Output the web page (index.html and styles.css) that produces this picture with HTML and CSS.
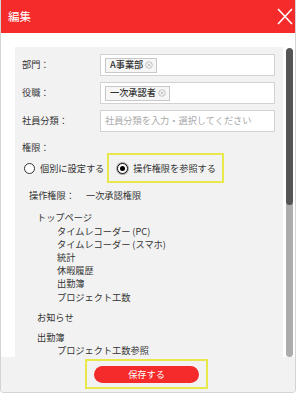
FILE: index.html
```html
<!DOCTYPE html>
<html lang="ja">
<head>
<meta charset="utf-8">
<link rel="stylesheet" href="styles.css">
</head>
<body>
<div class="modal">
  <div class="header">
    <span class="title">編集</span>
    <svg class="close" width="16" height="17" viewBox="0 0 16 17"><path d="M1 1 L15 16 M15 1 L1 16" stroke="#fff" stroke-width="1.6" fill="none"/></svg>
  </div>
  <div class="body">
    <div class="panel">
      <div class="content">
        <div class="form">
          <div class="label">部門：</div>
          <div class="input"><span class="tag">A事業部<svg class="x" width="8" height="8" viewBox="0 0 8 8"><circle cx="4" cy="4" r="3.3" fill="none" stroke="#bbb" stroke-width="0.9"/><path d="M2.6 2.6 L5.4 5.4 M5.4 2.6 L2.6 5.4" stroke="#bbb" stroke-width="0.9"/></svg></span></div>
          <div class="label">役職：</div>
          <div class="input"><span class="tag">一次承認者<svg class="x" width="8" height="8" viewBox="0 0 8 8"><circle cx="4" cy="4" r="3.3" fill="none" stroke="#bbb" stroke-width="0.9"/><path d="M2.6 2.6 L5.4 5.4 M5.4 2.6 L2.6 5.4" stroke="#bbb" stroke-width="0.9"/></svg></span></div>
          <div class="label">社員分類：</div>
          <div class="input"><span class="placeholder">社員分類を入力・選択してください</span></div>
        </div>
        <div class="perm-label">権限：</div>
        <div class="radios">
          <div class="radio"><span class="circle"></span><span>個別に設定する</span></div>
          <div class="radio selected-box"><span class="circle on"><span class="dot"></span></span><span>操作権限を参照する</span></div>
        </div>
        <div class="perm-line"><span class="perm-key">操作権限：</span><span>一次承認権限</span></div>
        <div class="group first">
          <div class="gtitle">トップページ</div>
          <div class="item">タイムレコーダー (PC)</div>
          <div class="item">タイムレコーダー (スマホ)</div>
          <div class="item">統計</div>
          <div class="item">休暇履歴</div>
          <div class="item">出勤簿</div>
          <div class="item">プロジェクト工数</div>
        </div>
        <div class="group">
          <div class="gtitle">お知らせ</div>
        </div>
        <div class="group">
          <div class="gtitle">出勤簿</div>
          <div class="item">プロジェクト工数参照</div>
        </div>
      </div>
    </div>
    <div class="scrollbar"><div class="thumb"></div></div>
  </div>
  <div class="footer">
    <div class="save-box"><button class="save">保存する</button></div>
  </div>
</div>
</body>
</html>
```
FILE: styles.css
```css
* { box-sizing: border-box; }
html, body { margin: 0; padding: 0; background: #fff; }
body {
  font-family: "Noto Sans CJK JP", "Noto Sans", sans-serif;
  color: #333;
  font-size: 9.2px;
}
.modal {
  width: 296px;
  height: 393px;
  border: 1px solid #d4d4d4;
  border-top: none;
  border-radius: 0 0 4px 4px;
  display: flex;
  flex-direction: column;
  overflow: hidden;
}
.header {
  height: 33px;
  flex: none;
  background: #f42b2a;
  display: flex;
  align-items: center;
  justify-content: space-between;
  padding: 0 2px 0 7px;
}
.title { color: #fff; font-size: 11.5px; line-height: 1; }
.close { display: block; margin-top: 0; }
.body {
  flex: 1;
  min-height: 0;
  background: #fff;
  display: flex;
  padding: 14px 2px 0 14px;
}
.panel {
  flex: 1;
  background: #f2f2f2;
  overflow: hidden;
}
.scrollbar {
  width: 7px;
  margin-left: 3px;
  margin-top: 1px;
  background: #acacac;
  border-radius: 3.5px;
  overflow: hidden;
}
.thumb {
  height: 157px;
  background: #555;
  border-radius: 3.5px;
}
.content { padding: 7px 8px 0 7px; line-height: 13.2px; }
.form {
  display: grid;
  grid-template-columns: 78px 1fr;
  row-gap: 6px;
  align-items: center;
}
.input {
  height: 22px;
  background: #fff;
  border: 1px solid #d2d2d2;
  display: flex;
  align-items: center;
  padding: 0 4px;
}
.tag {
  display: inline-flex;
  align-items: center;
  height: 15px;
  padding: 0 3px 0 4px;
  background: #f6f6f6;
  border: 1px solid #c8c8c8;
  color: #333;
  font-weight: 500;
  gap: 2px;
}
.x { display: block; }
.placeholder { color: #a9a9a9; }
.perm-label { margin-top: 9px; }
.radios {
  display: flex;
  align-items: center;
  height: 30px;
  margin-top: -1px;
  padding-left: 2px;
}
.radio { display: flex; align-items: center; gap: 5px; }
.selected-box {
  margin-left: 3px;
  height: 30px;
  border: 2px solid #e9e84a;
  padding: 0 6px 0 8px;
}
.circle {
  width: 11px;
  height: 11px;
  border-radius: 50%;
  border: 1px solid #333;
  background: #fff;
  display: flex;
  align-items: center;
  justify-content: center;
}
.circle.on {
  border: 1.5px solid #111;
  box-shadow: 0 0 0 1px #a8a8a8;
}
.dot { width: 5px; height: 5px; border-radius: 50%; background: #000; }
.perm-line { margin-top: 6px; padding-left: 7px; }
.perm-key { display: inline-block; width: 57px; }
.group { padding-left: 15px; margin-top: 7px; }
.group.first { margin-top: 9px; }
.item { padding-left: 20px; }
.footer {
  height: 35px;
  flex: none;
  background: #f2f2f2;
  display: flex;
  justify-content: center;
  padding-top: 2px;
}
.save-box {
  width: 123px;
  height: 30px;
  border: 2px solid #e9e84a;
  display: flex;
  align-items: center;
  justify-content: center;
  margin-right: 3px;
}
.save {
  width: 105px;
  height: 17px;
  border: none;
  border-radius: 9px;
  background: #f42b2a;
  color: #fff;
  font-family: "Noto Sans CJK JP", sans-serif;
  font-size: 9.2px;
  padding: 0;
  line-height: 17px;
}
```
